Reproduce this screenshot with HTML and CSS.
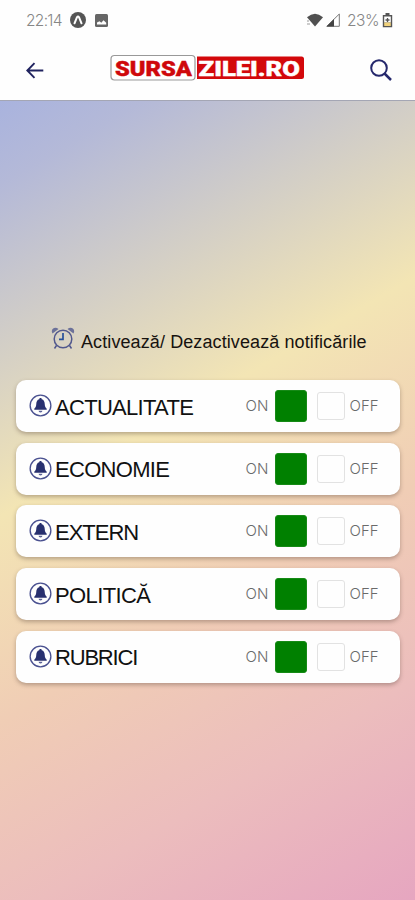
FILE: index.html
```html
<!DOCTYPE html>
<html lang="ro">
<head>
<meta charset="utf-8">
<title>Sursa Zilei</title>
<link rel="stylesheet" href="styles.css">
</head>
<body>
<svg class="defs" aria-hidden="true">
  <symbol id="bell" viewBox="0 0 24 24">
    <circle cx="12" cy="12" r="10.800" fill="none" stroke="#4a5190" stroke-width="1.400"/>
    <path d="M12 4.300c-.8 0-1.300.5-1.300 1.200C8.500 6 7.700 8 7.600 10.200c-.1 2.800-.7 3.800-2.100 5.200v1h13v-1c-1.400-1.400-2-2.400-2.100-5.200C16.300 8 15.500 6 13.300 5.500c0-.7-.5-1.200-1.300-1.200z" fill="#28306f"/>
    <path d="M10 17.500h4a2 1.700 0 0 1-4 0z" fill="#5b6297"/>
  </symbol>
</svg>
<header class="top">
  <div class="status">
    <span class="time">22:14</span>
    <svg class="app" viewBox="0 0 16 16"><circle cx="8" cy="8" r="8" fill="#555"/><path d="M4.500 11.300 7 5.200Q8 3.700 9 5.200l2.500 6.100" fill="none" stroke="#fff" stroke-width="2" stroke-linecap="round"/></svg>
    <svg class="photo" viewBox="0 0 13 13"><rect width="13" height="13" rx="1.500" fill="#666"/><path d="M2 10.500V8.500L4.500 7.200l1.800 1.500L8.500 6.300l2.700 2.500v1.700z" fill="#fff"/></svg>
    <span class="spacer"></span>
    <svg class="wifi" viewBox="0 0 17 14"><path d="M1 4.300Q9 -3 17 4.300L9 13.500z" fill="#505050"/><path d="M1 8h2M1 11h3" stroke="#999" stroke-width="1.200"/></svg>
    <svg class="signal" viewBox="0 0 14 14"><path d="M.8 13.300 13.300 1v12.300z" fill="#fff" stroke="#777" stroke-width="1"/><path d="M.5 13.500 8 6v7.500z" fill="#444"/></svg>
    <span class="percent">23%</span>
    <svg class="battery" viewBox="0 0 11 15"><path d="M3.500 0h4v2h2.700v12.300H.8V2h2.700z" fill="#555"/><path d="M2.200 3.500h6.600v6H2.200z" fill="#fff"/><path d="M2.200 9.500h6.600V13H2.200z" fill="#f1d27b"/><path d="M5.500 5v4M3.500 7h4" stroke="#555" stroke-width="1.300"/></svg>
  </div>
  <nav class="bar">
    <svg class="back" viewBox="0 0 18 17"><path d="M17.300 8.500H1.500M8.500 1.200 1.300 8.500l7.200 7.300" fill="none" stroke="#20235f" stroke-width="1.900"/></svg>
    <svg class="logo" viewBox="0 0 195 28">
      <rect x="1" y="1.500" width="84" height="24.500" rx="3.500" fill="#fff" stroke="#999" stroke-width="1.200"/>
      <path d="M87 2.500H191.500a2.500 2.500 0 0 1 2.500 2.500V22.500a2.500 2.500 0 0 1-2.500 2.500H87z" fill="#d3080b"/>
      <text x="5" y="21.500" textLength="77" lengthAdjust="spacingAndGlyphs" class="logo-text red">SURSA</text>
      <text x="88.500" y="21.500" textLength="101.500" lengthAdjust="spacingAndGlyphs" class="logo-text white">ZILEI.RO</text>
    </svg>
    <svg class="search" viewBox="0 0 22 22"><circle cx="9" cy="9" r="7.800" fill="none" stroke="#25286c" stroke-width="2"/><path d="m14.500 14.500 6.500 6.500" stroke="#25286c" stroke-width="2.500"/></svg>
  </nav>
</header>
<main class="content">
  <h1 class="heading">
    <svg class="clock" viewBox="0 0 24 23"><g fill="none" stroke="#51588d" stroke-width="1.500"><circle cx="12" cy="12" r="8.800"/><path d="m5.500 18.500-2 3M18.500 18.500l2 3"/></g><path d="M1.500 6.500C-1 2 4 -1 7.500 2zM22.500 6.500C25 2 20 -1 16.500 2z" fill="#6c7199"/><path d="M12 6v6.300H8" fill="none" stroke="#27509a" stroke-width="1.700"/></svg>
    <span class="heading-text">Activează/ Dezactivează notificările</span>
  </h1>
  <section class="list">
    <div class="card"><svg class="bell"><use href="#bell"/></svg><span class="name n1">ACTUALITATE</span><span class="on">ON</span><i class="box checked"></i><i class="box"></i><span class="off">OFF</span></div>
    <div class="card"><svg class="bell"><use href="#bell"/></svg><span class="name n2">ECONOMIE</span><span class="on">ON</span><i class="box checked"></i><i class="box"></i><span class="off">OFF</span></div>
    <div class="card"><svg class="bell"><use href="#bell"/></svg><span class="name n3">EXTERN</span><span class="on">ON</span><i class="box checked"></i><i class="box"></i><span class="off">OFF</span></div>
    <div class="card"><svg class="bell"><use href="#bell"/></svg><span class="name n4">POLITICĂ</span><span class="on">ON</span><i class="box checked"></i><i class="box"></i><span class="off">OFF</span></div>
    <div class="card"><svg class="bell"><use href="#bell"/></svg><span class="name n5">RUBRICI</span><span class="on">ON</span><i class="box checked"></i><i class="box"></i><span class="off">OFF</span></div>
  </section>
</main>
</body>
</html>
```
FILE: styles.css
```css
* { box-sizing: border-box; }
body { margin: 0; height: 900px; display: flex; flex-direction: column; overflow: hidden; font-family: "Liberation Sans", Arial, sans-serif; }
svg { display: block; flex: none; }
.defs { width: 0; height: 0; position: absolute; }
.top { height: 101px; background: #fefefe; border-bottom: 1px solid #a4a6b4; }
.status { height: 40px; display: flex; align-items: center; padding: 0 22px 0 26px; color: #868686; font: 300 15.500px/20px Inter, sans-serif; }
.time { width: 44px; letter-spacing: -0.7px; padding-top: 1px; }
.app { width: 16px; height: 16px; }
.photo { width: 13px; height: 13px; margin-left: 9px; }
.spacer { flex: 1; }
.wifi { width: 17px; height: 14px; }
.signal { width: 14px; height: 14px; margin: 0 7px 0 3px; }
.percent { width: 32px; letter-spacing: -0.4px; padding-top: 1px; }
.battery { width: 11px; height: 15px; margin-left: 3px; }
.bar { display: flex; height: 60px; align-items: center; padding: 0 23px 0 26px; }
.back { width: 18px; height: 17px; }
.logo { width: 195px; height: 28px; margin: -5px 0 0 66px; }
.logo-text { font: 900 20.500px Roboto, sans-serif; stroke-width: .4px; }
.red { fill: #cf080b; stroke: #cf080b; }
.white { fill: #fff; stroke: #fff; }
.search { width: 22px; height: 22px; margin-left: auto; }
.content { flex: 1; background: linear-gradient(150deg, #a9b3de 0%, #b4b9d8 8%, #f3e5b4 40%, #f0cdb5 60%, #ecbdbd 79%, #e6a6c0 100%); }
.heading { display: flex; margin: 226px 0 0 51px; height: 53px; font-weight: 400; }
.clock { width: 24px; height: 23px; }
.heading-text { margin: 4px 0 0 6px; font-size: 18px; line-height: 22px; letter-spacing: 0.1px; color: #17130f; white-space: nowrap; }
.list { display: flex; flex-direction: column; gap: 10.700px; padding: 0 15.500px 0 16px; }
.card { height: 52px; display: flex; align-items: center; padding: 0 20px 0 13px; border-radius: 10px; background: #fefefe; box-shadow: 0 2px 4px rgba(70, 50, 40, .35); }
.bell { width: 23px; height: 23px; margin-top: -1px; }
.name { flex: 1; margin: 3px 0 0 3px; font-size: 22px; line-height: 26px; color: #111; }
.n1 { letter-spacing: -0.7px; }
.n2 { letter-spacing: -0.7px; }
.n3 { letter-spacing: -1px; }
.n4 { letter-spacing: -0.6px; }
.n5 { letter-spacing: -1.2px; }
.on, .off { font: 300 15px/20px Inter, sans-serif; color: #6a6a6a; }
.on { width: 29px; }
.off { width: 30px; margin-left: 5px; }
.box { width: 28px; height: 28px; border: 1px solid #e2e2e2; border-radius: 3px; background: #fefefe; }
.checked { width: 32px; height: 32px; margin-right: 10px; background: #008000; border-color: #168a16; }
```
